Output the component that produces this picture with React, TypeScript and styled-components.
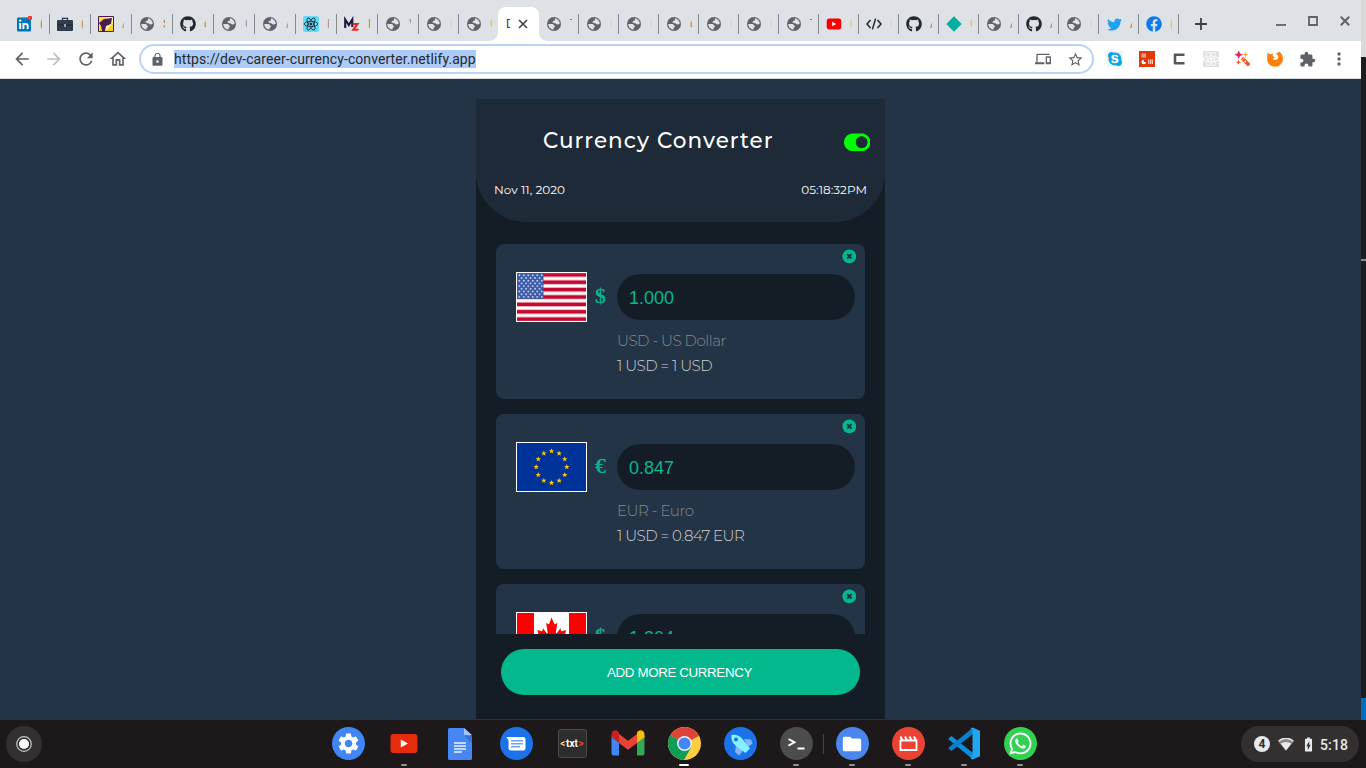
import React from 'react';
import styled, { createGlobalStyle } from 'styled-components';
import { FaGithub, FaReact, FaTwitter, FaFacebook, FaToggleOn, FaWhatsapp, FaSkype } from 'react-icons/fa';
import {
  MdArrowBack, MdArrowForward, MdRefresh, MdOutlineHome, MdLock, MdStarBorder,
  MdExtension, MdMoreVert, MdDevices, MdSettings, MdFolder, MdBatteryChargingFull,
} from 'react-icons/md';

const Global = createGlobalStyle`
  * { box-sizing: border-box; }
  body { margin: 0; background: #1d181a; overflow: hidden; font-family: Roboto, sans-serif; }
  svg { display: block; flex: none; }
`;

const Desktop = styled.div`
  width: 1366px;
  height: 768px;
  display: flex;
  flex-direction: column;
  overflow: hidden;
`;

const Workspace = styled.div`
  height: 720px;
  display: flex;
`;

const Browser = styled.div`
  width: 1361px;
  display: flex;
  flex-direction: column;
  background: #243447;
`;

const Behind = styled.div`
  width: 5px;
  display: flex;
  flex-direction: column;
  background: #1e1e1e;
`;

const BehindPart = styled.div<{ $h: number; $bg: string }>`
  height: ${p => p.$h}px;
  background: ${p => p.$bg};
`;

/* ---------- tab strip ---------- */

const TabStrip = styled.div`
  height: 41px;
  flex: none;
  display: flex;
  align-items: flex-end;
  padding-left: 9px;
  background: #dee1e6;
`;

const Tab = styled.div<{ $w: number; $line: boolean }>`
  width: ${p => p.$w}px;
  height: 20px;
  margin-bottom: 7px;
  padding-left: 7px;
  display: flex;
  align-items: center;
  border-right: ${p => (p.$line ? '1px solid #85888d' : '0')};
`;

const Favicon = styled.div`
  width: 16px;
  height: 16px;
  display: flex;
  align-items: center;
  justify-content: center;
`;

const TabTitle = styled.span<{ $c: string }>`
  width: 2px;
  margin-left: 8px;
  overflow: hidden;
  font-size: 12px;
  line-height: 16px;
  color: ${p => p.$c};
`;

const ActiveTab = styled.div`
  width: 41px;
  height: 34px;
  padding: 0 0 0 8px;
  display: flex;
  align-items: center;
  gap: 8px;
  background: #fff;
  border-radius: 8px 8px 0 0;
  position: relative;
  &::before, &::after {
    content: '';
    position: absolute;
    bottom: 0;
    width: 8px;
    height: 8px;
  }
  &::before { left: -8px; background: radial-gradient(circle at 0 0, transparent 7.5px, #fff 8px); }
  &::after { right: -8px; background: radial-gradient(circle at 100% 0, transparent 7.5px, #fff 8px); }
`;

const ActiveTitle = styled.span`
  width: 4px;
  overflow: hidden;
  font-size: 12px;
  color: #3c4043;
`;

const NewTab = styled.div`
  width: 44px;
  height: 34px;
  display: flex;
  align-items: center;
  justify-content: center;
`;

const WindowButtons = styled.div`
  height: 41px;
  margin-left: auto;
  padding: 15px 10px 0 0;
  display: flex;
  gap: 20px;
`;

/* ---------- toolbar ---------- */

const Toolbar = styled.div`
  height: 38px;
  flex: none;
  display: flex;
  align-items: center;
  padding: 0 6px 1px;
  background: #fff;
  border-bottom: 1px solid #d5d8dc;
`;

const ToolButton = styled.div<{ $c?: string }>`
  width: 32px;
  height: 32px;
  display: flex;
  align-items: center;
  justify-content: center;
  color: ${p => p.$c || '#5f6368'};
`;

const Omnibox = styled.div`
  width: 955px;
  height: 30px;
  margin: 0 5px 0 5px;
  padding: 0 1px 0 9px;
  display: flex;
  align-items: center;
  border: 2px solid #b9d3f8;
  border-radius: 15px;
  color: #5f6368;
`;

const Url = styled.span`
  height: 18px;
  margin-left: 9px;
  margin-right: auto;
  background: #accbf8;
  color: #26282c;
  font: 14px/18px Roboto, sans-serif;
  letter-spacing: 0.08px;
  white-space: nowrap;
`;

/* ---------- converter ---------- */

const Page = styled.div`
  flex: 1;
  display: flex;
  justify-content: center;
  padding: 20px 0 1px;
`;

const Converter = styled.div`
  width: 409px;
  display: flex;
  flex-direction: column;
  background: #141d26;
  font-family: Montserrat, Inter, sans-serif;
`;

const Header = styled.header`
  height: 123px;
  flex: none;
  padding: 28px 15px 0 18px;
  background: #1e2a38;
  border-radius: 0 0 50px 50px;
  color: #fff;
`;

const TitleRow = styled.div`
  display: flex;
  align-items: center;
  justify-content: space-between;
  padding-left: 49px;
  height: 27px;
`;

const Title = styled.h1`
  margin: 0;
  font-size: 21.5px;
  line-height: 27px;
  font-weight: 500;
  letter-spacing: 1.03px;
  white-space: nowrap;
`;

const Toggle = styled.div`
  color: #0f0;
  padding-top: 4px;
`;

const DateRow = styled.div`
  display: flex;
  justify-content: space-between;
  margin-top: 27px;
  padding-right: 3px;
  font-size: 12px;
  line-height: 18px;
`;

const Stamp = styled.span<{ $ls: number }>`
  letter-spacing: ${p => p.$ls}px;
`;

const List = styled.div`
  height: 390px;
  margin: 22px 20px 0;
  overflow: hidden;
`;

const Card = styled.div`
  height: 155px;
  margin-bottom: 15px;
  padding: 5px 9px 0 20px;
  border-radius: 8px;
  background: #243447;
`;

const CloseRow = styled.div`
  display: flex;
  justify-content: flex-end;
  height: 23px;
`;

const CardBody = styled.div`
  display: flex;
`;

const Flag = styled.div`
  width: 71px;
  height: 50px;
  border: 1px solid #fff;
  overflow: hidden;
`;

const Symbol = styled.span`
  width: 30px;
  padding-left: 8px;
  font: bold 22px/48px 'Liberation Serif', serif;
  color: #04b88e;
`;

const Fields = styled.div`
  width: 238px;
  padding-top: 2px;
`;

const Amount = styled.div`
  height: 46px;
  padding: 1px 0 0 12px;
  border-radius: 23px;
  background: #141d26;
  color: #04b88e;
  font: 18px/46px 'Liberation Sans', sans-serif;
`;

const Line = styled.div<{ $c: string; $ls: number; $top: number }>`
  margin-top: ${p => p.$top}px;
  font-size: 15px;
  line-height: 20px;
  font-weight: 300;
  letter-spacing: ${p => p.$ls}px;
  color: ${p => p.$c};
  white-space: nowrap;
`;

const AddButton = styled.button`
  width: 359px;
  height: 46px;
  margin: 15px 25px 0;
  padding: 0 2px 0 0;
  border: 0;
  border-radius: 23px;
  background: #04b88e;
  color: #fff;
  font: 13.33px 'Liberation Sans', sans-serif;
  letter-spacing: -0.36px;
`;

/* ---------- shelf ---------- */

const Shelf = styled.div`
  height: 48px;
  display: flex;
  align-items: center;
  justify-content: space-between;
  padding: 0 7px 0 6px;
  background: #1d181a;
`;

const Launcher = styled.div`
  width: 36px;
  height: 36px;
  margin-right: 278px;
  border-radius: 50%;
  background: #333130;
  display: flex;
  align-items: center;
  justify-content: center;
`;

const Apps = styled.div`
  display: flex;
  align-items: center;
  margin-right: auto;
`;

const App56 = styled.div`
  width: 56px;
  height: 48px;
  display: flex;
  flex-direction: column;
  align-items: center;
  justify-content: space-between;
  padding: 7px 0 2px;
`;

const Running = styled.div<{ $on: boolean; $active: boolean }>`
  width: ${p => (p.$active ? 10 : 6)}px;
  height: 2px;
  border-radius: 1px;
  background: ${p => (p.$active ? '#fff' : p.$on ? '#918f90' : 'transparent')};
`;

const Disc = styled.div<{ $bg: string }>`
  width: 33px;
  height: 33px;
  border-radius: 50%;
  background: ${p => p.$bg};
  color: #fff;
  display: flex;
  align-items: center;
  justify-content: center;
`;

const Divider = styled.div`
  width: 1px;
  height: 20px;
  margin: 0 0 0 -1px;
  background: #4a4647;
`;

const TxtTile = styled.div`
  width: 29px;
  height: 29px;
  margin-top: 2px;
  border: 1px solid #4b4b4b;
  border-radius: 3px;
  background: #2d2d2d;
  color: #fff;
  display: flex;
  align-items: center;
  justify-content: center;
  font: bold 10px Roboto, sans-serif;
  letter-spacing: 0;
`;

const Tint = styled.span<{ $c: string }>`
  color: ${p => p.$c};
  padding: 0 0.7px;
`;

const Status = styled.div`
  width: 118px;
  height: 36px;
  padding-left: 13px;
  border-radius: 18px;
  background: #33302f;
  display: flex;
  align-items: center;
  color: #e8eaed;
`;

const Count = styled.div`
  width: 16px;
  height: 16px;
  margin-right: 8px;
  border-radius: 50%;
  background: #e8eaed;
  color: #2b2a2a;
  font: bold 12px/16px Roboto, sans-serif;
  text-align: center;
`;

const Clock = styled.span`
  margin-left: 3px;
  padding-top: 1px;
  font-size: 14px;
  letter-spacing: 0.15px;
  font-weight: 500;
`;

const Battery = styled.div`
  margin-left: 6px;
`;

/* ---------- drawings ---------- */

const Globe = () => (
  <svg width="14" height="14" viewBox="0 0 14 14">
    <circle cx="7" cy="7" r="7" fill="#5f6368" />
    <path d="M1.300 7H4.900c1.200 0 1.900.5 2 1.300.1.500.6.500 1.100.6-.1 1.600-1.200 1.700-1.400 2.100v1.600C3.600 12.500 1.300 10 1.300 7z" fill="#dee1e6" />
    <path d="M7.900 1.300c2.600.4 4.600 2.500 4.900 5.300-.9.600-1.600 1.100-2.600.9-1.100-.2-1-1.100-1.900-1.300-1-.2-2.300.200-2.700-.7-.3-.9.500-1.500 1.300-1.700.8-.1 1.100-.6 1-1.400z" fill="#dee1e6" />
  </svg>
);

const LinkedIn = () => (
  <svg width="16" height="16" viewBox="0 0 16 16">
    <rect x="1" y="1.500" width="14" height="14" rx="1" fill="#0077b5" />
    <path d="M4.200 7v6M7.400 13V7M7.400 9.800c0-2.500 4.300-2.700 4.300 0V13" stroke="#fff" strokeWidth="1.900" fill="none" />
    <circle cx="4.200" cy="4.600" r="1.200" fill="#fff" />
    <circle cx="14" cy="2" r="2.300" fill="#ee3f3a" />
  </svg>
);

const Briefcase = () => (
  <svg width="16" height="16" viewBox="0 0 16 16">
    <path d="M5.500 4V2.300h5V4" stroke="#2b3947" strokeWidth="1.300" fill="none" />
    <rect y="4" width="16" height="11" rx="1" fill="#2f3d4c" />
    <path d="M0 9h16" stroke="#1c2733" />
    <rect x="7" y="8" width="2" height="3" fill="#95a5b0" />
  </svg>
);

const Painting = () => (
  <svg width="16" height="16" viewBox="0 0 16 16">
    <path d="M0 0h16v16H0z" fill="#f9dc3f" />
    <path d="M8 1h7v14H7z" fill="#fdf6a5" />
    <path d="M15 7v8H8z" fill="#fbcf1d" />
    <path d="M1 7 6 3l8-1-1 6-5 2-1 5H4l-1-5z" fill="#4b1d4f" />
    <path d="M.5.500h15v15H.5z" stroke="#4b1d4f" fill="none" />
  </svg>
);

const ReactTile = () => (
  <svg width="16" height="16" viewBox="0 0 16 16">
    <rect width="16" height="16" rx="2" fill="#61dafb" />
    <g fill="none" stroke="#20232a" strokeWidth=".8">
      <ellipse cx="8" cy="8" rx="6.800" ry="2.600" />
      <ellipse cx="8" cy="8" rx="6.800" ry="2.600" transform="rotate(60 8 8)" />
      <ellipse cx="8" cy="8" rx="6.800" ry="2.600" transform="rotate(120 8 8)" />
    </g>
    <circle cx="8" cy="8" r="1.300" fill="#20232a" />
  </svg>
);

const MzMark = () => (
  <svg width="16" height="16" viewBox="0 0 16 16">
    <path d="M1.200 12V3.500L4.800 9l3.500-5.500V11" stroke="#1e1743" strokeWidth="2.100" fill="none" />
    <path d="M8.500 8h5l-4.200 5.800h5.200" stroke="#e02c1e" strokeWidth="2.100" fill="none" />
  </svg>
);

const YouTubeSmall = () => (
  <svg width="16" height="16" viewBox="0 0 16 16">
    <rect x=".7" y="2.600" width="14.600" height="10.800" rx="2.600" fill="#f00" />
    <path d="M6.200 5.700v4.600L10.300 8z" fill="#fff" />
  </svg>
);

const CodeMark = () => (
  <svg width="16" height="16" viewBox="0 0 16 16" fill="none" stroke="#24292e" strokeWidth="1.500">
    <path d="M4.500 4 1 8l3.500 4M11.500 4 15 8l-3.500 4M9.600 2.600 6.400 13.400" />
  </svg>
);

const Diamond = () => (
  <svg width="16" height="16" viewBox="0 0 16 16"><path d="M8 .3 15.700 8 8 15.700.3 8z" fill="#05aea0" /></svg>
);

const CancelMark = () => (
  <svg width="15" height="15" viewBox="0 0 15 15">
    <circle cx="8.300" cy="7.300" r="6.900" fill="#04b88e" />
    <path d="m6.100 5.100 4.400 4.400m0-4.400-4.400 4.400" stroke="#1c3343" strokeWidth="1.900" />
  </svg>
);

const canton = Array.from({ length: 9 }, (_, r) =>
  Array.from({ length: r % 2 ? 5 : 6 }, (_, c) => [2.3 + c * 4.5 + (r % 2 ? 2.25 : 0), 2.3 + r * 2.7]),
).flat();

const UsFlag = () => (
  <svg width="69" height="48" viewBox="0 0 69 48">
    <rect width="69" height="48" fill="#fff" />
    {[0, 1, 2, 3, 4, 5, 6].map(i => (
      <g key={i}>
        <rect y={i * 7.385 - 0.8} width="69" height="5.300" fill="#efb3c0" />
        <rect y={i * 7.385 + 0.2} width="69" height="3.300" fill="#c00a2f" />
      </g>
    ))}
    <rect width="26.500" height="25.850" fill="#3b5ca8" />
    {canton.map(([x, y]) => <circle key={`${x}-${y}`} cx={x} cy={y} r=".95" fill="#c5cfe6" />)}
  </svg>
);

const star = (cx: number, cy: number, r: number) =>
  Array.from({ length: 10 }, (_, i) => {
    const a = (Math.PI / 5) * i - Math.PI / 2;
    const q = i % 2 ? r * 0.4 : r;
    return `${cx + q * Math.cos(a)},${cy + q * Math.sin(a)}`;
  }).join(' ');

const EuFlag = () => (
  <svg width="69" height="48" viewBox="0 0 69 48">
    <rect width="69" height="48" fill="#039" />
    {Array.from({ length: 12 }, (_, i) => {
      const a = (Math.PI / 6) * i;
      return <polygon key={i} points={star(34.5 + 15.3 * Math.cos(a), 24 + 15.8 * Math.sin(a), 2.9)} fill="#fc0" />;
    })}
  </svg>
);

const CaFlag = () => (
  <svg width="69" height="48" viewBox="0 0 69 48">
    <rect width="69" height="48" fill="#fff" />
    <path d="M0 0h17v48H0zM52 0h17v48H52z" fill="#f00" />
    <path d="m34.500 4.500 3.300 6.200c.4.600.9.500 1.500.2l2.300-1.200-1.700 9.300c-.3 1.500.8 1.500 1.300.9l4.200-4.700.7 2.400c.1.400.5.700 1 .600l5.100-1.100-1.400 5c-.2.600-.3 1 .3 1.200l1.900.9-10.800 8.900c-.6.500-.5 1-.3 1.600l.9 3.200-7-1.300V43h-2v-6.400l-7 1.300.9-3.200c.2-.6.3-1.100-.3-1.600l-10.800-8.900 1.900-.9c.6-.2.500-.6.3-1.200l-1.400-5 5.100 1.100c.5.100.9-.2 1-.600l.7-2.400 4.200 4.700c.5.600 1.600.6 1.300-.9l-1.700-9.300 2.300 1.200c.6.300 1.100.4 1.500-.2z" fill="#f00" transform="translate(6.200 0) scale(.82 1)" />
  </svg>
);

const Office = () => (
  <svg width="16" height="16" viewBox="0 0 16 16">
    <path d="M0 0h16v16H0z" fill="#e03a08" />
    <path d="M2.500 2.500h4.500v4H2.500z" fill="#f3a186" />
    <path d="M9 8.500h5v4.500H9z" fill="#f8c3b3" />
    <path d="M10.500 8.500V13m2-4.500V13" stroke="#e03a08" strokeWidth=".6" />
    <circle cx="4.800" cy="11" r="2.300" fill="#fff" />
    <path d="M4.800 11V8.500h3V11z" fill="#e03a08" />
  </svg>
);

const BracketC = () => (
  <svg width="16" height="16" viewBox="0 0 16 16">
    <path d="M13.500 3.800H4v8.400h9.500" stroke="#56585b" strokeWidth="2.600" fill="none" strokeLinejoin="round" />
  </svg>
);

const ReactGrey = styled.div`
  width: 16px;
  height: 16px;
  background: #e2e2e2;
  color: #fff;
`;

const SkypeTile = styled.div`
  width: 16px;
  height: 16px;
  background: radial-gradient(circle, #fff 5px, #eef3f5 6px);
  color: #0ba4e4;
`;

const Wand = () => (
  <svg width="16" height="16" viewBox="0 0 16 16">
    <path d="m5.800 8.200 2.600-2.500 7 7.300-2.500 2.600z" fill="#f4511e" />
    <path d="m7 9.400 2.600-2.600" stroke="#fff" strokeWidth=".8" />
    <circle cx="10.300" cy="10.500" r="1.100" fill="#fff" />
    <path d="m3.700 0 1 2.700 2.800 1-2.800 1-1 2.800-1-2.800L0 3.700l2.700-1z" fill="#d81b60" stroke="#d81b60" strokeWidth=".6" />
    <path d="m10.500.5.800 2.200 2.200.8-2.200.8-.8 2.200-.8-2.200-2.200-.8 2.200-.8z" fill="#ffb020" />
    <path d="m3.500 8.500.7 2 2 .7-2 .7-.7 2-.7-2-2-.7 2-.7z" fill="#f4511e" />
  </svg>
);

const Fox = () => (
  <svg width="16" height="16" viewBox="0 0 16 16">
    <path d="M.5 1.500 3 3.500C4.500 2.500 6 2.800 6 2.800L5.600 5l2.300 1.200-2 1.300c.5 1.800 2.800 2 4.600.6 1.300-1.200 1-3.300-.2-4.400L9 2.500 12.300.8c2.300 1.400 3.500 3.700 3.600 6.700C16 12.300 12.500 15.700 8 15.700S.2 12.300.1 8z" fill="#ff7f0a" />
  </svg>
);

const DocsIcon = () => (
  <svg width="24" height="33" viewBox="0 0 24 33">
    <path d="M1.500 1H16l8 8v22.500a1.500 1.500 0 0 1-1.500 1.500h-21A1.500 1.500 0 0 1 0 31.500v-29A1.500 1.500 0 0 1 1.500 1z" fill="#4787f3" />
    <path d="M16 1v7h8z" fill="#a5c4fb" />
    <path d="M16 8.500 24 16V9z" fill="#3a70d4" />
    <path d="M6 16h12M6 19h12M6 22h12M6 25h8" stroke="#eef4ff" strokeWidth="1.400" />
  </svg>
);

const YouTubeIcon = () => (
  <svg width="28" height="33" viewBox="0 0 28 33">
    <rect x=".5" y="7" width="27" height="19" rx="3" fill="#e62a0c" />
    <path d="M10.800 12.500v8L18 16.500z" fill="#fff" />
  </svg>
);

const MessagesIcon = () => (
  <svg width="33" height="33" viewBox="0 0 33 33">
    <circle cx="16.500" cy="16.500" r="16.500" fill="#1a73e8" />
    <path d="M6.300 10H23a2.500 2.500 0 0 1 2.500 2.500V21a2.500 2.500 0 0 1-2.500 2.500H11A2.500 2.500 0 0 1 8.500 21v-7.500z" fill="#fff" />
    <path d="M11 13.700h12M11 16.700h12M11 19.700h9" stroke="#6ea5f5" strokeWidth="1.400" />
  </svg>
);

const GmailIcon = () => (
  <svg width="34" height="33" viewBox="0 0 34 33">
    <path d="M.5 9v17.500a2 2 0 0 0 2 2H8V13z" fill="#4285f4" />
    <path d="M26 13v15.500h5.500a2 2 0 0 0 2-2V9z" fill="#34a853" />
    <path d="M8 7v9l9 6.800 9-6.800V7l-9 6.800z" fill="#ea4335" />
    <path d="M.5 7.800C.5 4 4 2.300 6.700 4.300L8 5.500V16L.5 10.500z" fill="#c5221f" transform="translate(0 -.2)" />
    <path d="M33.500 7.800c0-3.800-3.500-5.500-6.200-3.500L26 5.500V16l7.500-5.500z" fill="#fbbc04" transform="translate(0 -.2)" />
  </svg>
);

const ChromeIcon = () => (
  <svg width="33" height="33" viewBox="0 0 33 33">
    <circle cx="16.500" cy="16.500" r="16.500" fill="#ffcd40" />
    <path d="M16.500 16.500 2.200 8.200A16.500 16.500 0 0 1 30.800 9z" fill="#db4437" />
    <path d="M16.500 9h14.300A16.500 16.500 0 0 0 16.500 0z" fill="#db4437" />
    <path d="M2.300 8.200A16.500 16.500 0 0 0 16 33l7-12.500-6.500-4z" fill="#0f9d58" />
    <circle cx="16.500" cy="16.500" r="7.500" fill="#f1f1f1" />
    <circle cx="16.500" cy="16.500" r="6" fill="#4285f4" />
  </svg>
);

const RocketIcon = () => (
  <svg width="33" height="33" viewBox="0 0 33 33">
    <circle cx="16.500" cy="16.500" r="16.500" fill="#1a73e8" />
    <path d="m20 12 7 .5 1.500 4L24 20zM12 18l-1 7 4 3.500 4-5z" fill="#8ab4f8" />
    <path d="M7.500 8c4-.8 7.500.2 10.500 3.500L26 21.500 21.500 26l-10-7.500C8 15.500 7 12 7.500 8z" fill="#84f3ff" />
    <circle cx="12" cy="12.500" r="2" fill="#1a73e8" />
  </svg>
);

const PromptMark = () => (
  <svg width="33" height="33" viewBox="0 0 33 33" fill="none" stroke="#fff" strokeWidth="1.900">
    <path d="m8.500 12 6 3.300-6 3.300M17.500 21.500h7" />
  </svg>
);

const ClapperMark = () => (
  <svg width="33" height="33" viewBox="0 0 33 33">
    <path d="M8.500 13.500h16v9.500h-16z" stroke="#fff" strokeWidth="1.800" fill="none" />
    <path d="m8.500 9.500 2 4M13 9.500l2 4M17.500 9.500l2 4M22 9.500l2 4" stroke="#fff" strokeWidth="2" />
  </svg>
);

const CodeIcon = () => (
  <svg width="33" height="33" viewBox="0 0 33 33">
    <path d="M1 12.700a1 1 0 0 1 0-1.600L3.500 9 25 26v6.500z" fill="#0a8fdd" />
    <path d="M1 20.300a1 1 0 0 0 0 1.600L3.500 24 25 7V.5z" fill="#0a7fca" />
    <path d="m24.500.5 7.500 3.200v25.600l-7.500 3.200-2-1 2-1.500V3l-2-1.500z" fill="#24a5ef" />
  </svg>
);

const WifiMark = () => (
  <svg width="16" height="13" viewBox="0 0 16 13">
    <path d="M0 3.300Q8-3.300 16 3.300L8 12.800z" fill="#8b8989" />
    <path d="M.7 3Q8-2.500 15.300 3" stroke="#e8eaed" strokeWidth="1.500" fill="none" />
    <path d="M2.700 5.600Q8 2.200 13.300 5.600L8 12.500z" fill="#e8eaed" />
  </svg>
);

/* ---------- data ---------- */

const leftTabs: [React.ReactNode, string, string, number][] = [
  [<LinkedIn />, '(', '#b58a4d', 41],
  [<Briefcase />, '(', '#b58a4d', 41],
  [<Painting />, 'A', '#b58a4d', 41],
  [<Globe />, 'S', '#a47c55', 41],
  [<FaGithub size={16} color="#24292e" />, 'c', '#b58a4d', 41],
  [<Globe />, 'C', '#a08bb5', 41],
  [<Globe />, 'A', '#b58a4d', 41],
  [<ReactTile />, 'I', '#a68d80', 41],
  [<MzMark />, 'I', '#8f8570', 41],
  [<Globe />, 'V', '#8a7d9b', 41],
  [<Globe />, 'I', '#e6d492', 40],
  [<Globe />, 'C', '#e8b266', 39],
];

const rightTabs: [React.ReactNode, string, string][] = [
  [<Globe />, 'T', '#95705d'],
  [<Globe />, 'I', '#ead78e'],
  [<Globe />, 'I', '#ead78e'],
  [<Globe />, 'c', '#c7853b'],
  [<Globe />, 'I', '#ead78e'],
  [<Globe />, 'I', '#ead78e'],
  [<Globe />, 'T', '#95705d'],
  [<YouTubeSmall />, 'C', '#e8c27a'],
  [<CodeMark />, 'I', '#ead78e'],
  [<FaGithub size={16} color="#24292e" />, 'A', '#c7752b'],
  [<Diamond />, 'C', '#e8b266'],
  [<Globe />, 'A', '#c7752b'],
  [<FaGithub size={16} color="#24292e" />, 'A', '#c7752b'],
  [<Globe />, 'I', '#ead78e'],
  [<FaTwitter size={15} color="#1da1f2" />, 'A', '#c7752b'],
  [<FaFacebook size={16} color="#0b7cf0" />, '(', '#e8b266'],
];

const rates = [
  { flag: <UsFlag />, symbol: '$', amount: '1.000', name: 'USD - US Dollar', rate: '1 USD = 1 USD' },
  { flag: <EuFlag />, symbol: '€', amount: '0.847', name: 'EUR - Euro', rate: '1 USD = 0.847 EUR' },
  { flag: <CaFlag />, symbol: '$', amount: '1.304', name: 'CAD - Canadian Dollar', rate: '1 USD = 1.304 CAD' },
];

const shelfApps: { icon: React.ReactNode; on?: boolean; active?: boolean }[] = [
  { icon: <Disc $bg="#4285f4"><MdSettings size={25} /></Disc> },
  { icon: <YouTubeIcon />, on: true },
  { icon: <DocsIcon /> },
  { icon: <MessagesIcon /> },
  { icon: <TxtTile><Tint $c="#f5c869">&lt;</Tint>txt<Tint $c="#ea4335">&gt;</Tint></TxtTile> },
  { icon: <GmailIcon /> },
  { icon: <ChromeIcon />, on: true, active: true },
  { icon: <RocketIcon /> },
  { icon: <Disc $bg="#4c4c4c"><PromptMark /></Disc>, on: true },
];

const pinnedApps: typeof shelfApps = [
  { icon: <Disc $bg="#4a86f0"><MdFolder size={22} /></Disc>, on: true },
  { icon: <Disc $bg="#ea4335"><ClapperMark /></Disc>, on: true },
  { icon: <CodeIcon />, on: true },
  { icon: <Disc $bg="#33d151"><FaWhatsapp size={25} /></Disc>, on: true },
];

const ShelfApp = ({ icon, on = false, active = false }: (typeof shelfApps)[number]) => (
  <App56>
    {icon}
    <Running $on={on} $active={active} />
  </App56>
);

export default function App() {
  return (
    <Desktop>
      <Global />
      <Workspace>
        <Browser>
          <TabStrip>
            {leftTabs.map(([icon, text, color, w], i) => (
              <Tab key={i} $w={w} $line={i < 11}>
                <Favicon>{icon}</Favicon>
                <TabTitle $c={color}>{text}</TabTitle>
              </Tab>
            ))}
            <ActiveTab>
              <ActiveTitle>D</ActiveTitle>
              <svg width="10" height="10" viewBox="0 0 10 10"><path d="m1 1 8 8m0-8L1 9" stroke="#3c4043" strokeWidth="1.600" /></svg>
            </ActiveTab>
            {rightTabs.map(([icon, text, color], i) => (
              <Tab key={i} $w={40} $line>
                <Favicon>{icon}</Favicon>
                <TabTitle $c={color}>{text}</TabTitle>
              </Tab>
            ))}
            <NewTab>
              <svg width="12" height="12" viewBox="0 0 12 12"><path d="M6 0v12M0 6h12" stroke="#3c4043" strokeWidth="1.800" /></svg>
            </NewTab>
            <WindowButtons>
              <svg width="12" height="12" viewBox="0 0 12 12"><path d="M1 10h10" stroke="#5f6368" strokeWidth="1.800" /></svg>
              <svg width="12" height="12" viewBox="0 0 12 12"><path d="M2 2h8v8H2z" stroke="#5f6368" strokeWidth="1.800" fill="none" /></svg>
              <svg width="12" height="12" viewBox="0 0 12 12"><path d="m1.800 1.800 8.400 8.400m0-8.400-8.400 8.400" stroke="#5f6368" strokeWidth="2" /></svg>
            </WindowButtons>
          </TabStrip>
          <Toolbar>
            <ToolButton><MdArrowBack size={20} /></ToolButton>
            <ToolButton $c="#bcbec1"><MdArrowForward size={20} /></ToolButton>
            <ToolButton><MdRefresh size={20} /></ToolButton>
            <ToolButton><MdOutlineHome size={20} /></ToolButton>
            <Omnibox>
              <MdLock size={15} />
              <Url>https://dev-career-currency-converter.netlify.app</Url>
              <ToolButton><MdDevices size={16} /></ToolButton>
              <ToolButton><MdStarBorder size={17} /></ToolButton>
            </Omnibox>
            <ToolButton><SkypeTile><FaSkype size={16} /></SkypeTile></ToolButton>
            <ToolButton><Office /></ToolButton>
            <ToolButton><BracketC /></ToolButton>
            <ToolButton><ReactGrey><FaReact size={16} /></ReactGrey></ToolButton>
            <ToolButton><Wand /></ToolButton>
            <ToolButton><Fox /></ToolButton>
            <ToolButton><MdExtension size={17} /></ToolButton>
            <ToolButton><MdMoreVert size={20} /></ToolButton>
          </Toolbar>
          <Page>
            <Converter>
              <Header>
                <TitleRow>
                  <Title>Currency Converter</Title>
                  <Toggle><FaToggleOn size={26.5} /></Toggle>
                </TitleRow>
                <DateRow>
                  <Stamp $ls={0.04}>Nov 11, 2020</Stamp>
                  <Stamp $ls={0.05}>05:18:32PM</Stamp>
                </DateRow>
              </Header>
              <List>
                {rates.map(r => (
                  <Card key={r.name}>
                    <CloseRow><CancelMark /></CloseRow>
                    <CardBody>
                      <Flag>{r.flag}</Flag>
                      <Symbol>{r.symbol}</Symbol>
                      <Fields>
                        <Amount>{r.amount}</Amount>
                        <Line $c="#85888a" $ls={-0.46} $top={11}>{r.name}</Line>
                        <Line $c="#d0d1d2" $ls={-0.48} $top={5}>{r.rate}</Line>
                      </Fields>
                    </CardBody>
                  </Card>
                ))}
              </List>
              <AddButton>ADD MORE CURRENCY</AddButton>
            </Converter>
          </Page>
        </Browser>
        <Behind>
          <BehindPart $h={57} $bg="#d9d9d9" />
          <BehindPart $h={202} $bg="#1e1e1e" />
          <BehindPart $h={2} $bg="#8a8a8a" />
          <BehindPart $h={437} $bg="#1e1e1e" />
          <BehindPart $h={22} $bg="#0070bd" />
        </Behind>
      </Workspace>
      <Shelf>
        <Launcher>
          <svg width="16" height="16" viewBox="0 0 16 16">
            <circle cx="8" cy="8" r="7.300" fill="none" stroke="#c9c8c8" strokeWidth="1.200" />
            <circle cx="8" cy="8" r="5" fill="#fff" />
          </svg>
        </Launcher>
        <Apps>
          {shelfApps.map((a, i) => <ShelfApp key={i} {...a} />)}
          <Divider />
          {pinnedApps.map((a, i) => <ShelfApp key={i} {...a} />)}
        </Apps>
        <Status>
          <Count>4</Count>
          <WifiMark />
          <Battery><MdBatteryChargingFull size={17} /></Battery>
          <Clock>5:18</Clock>
        </Status>
      </Shelf>
    </Desktop>
  );
}
